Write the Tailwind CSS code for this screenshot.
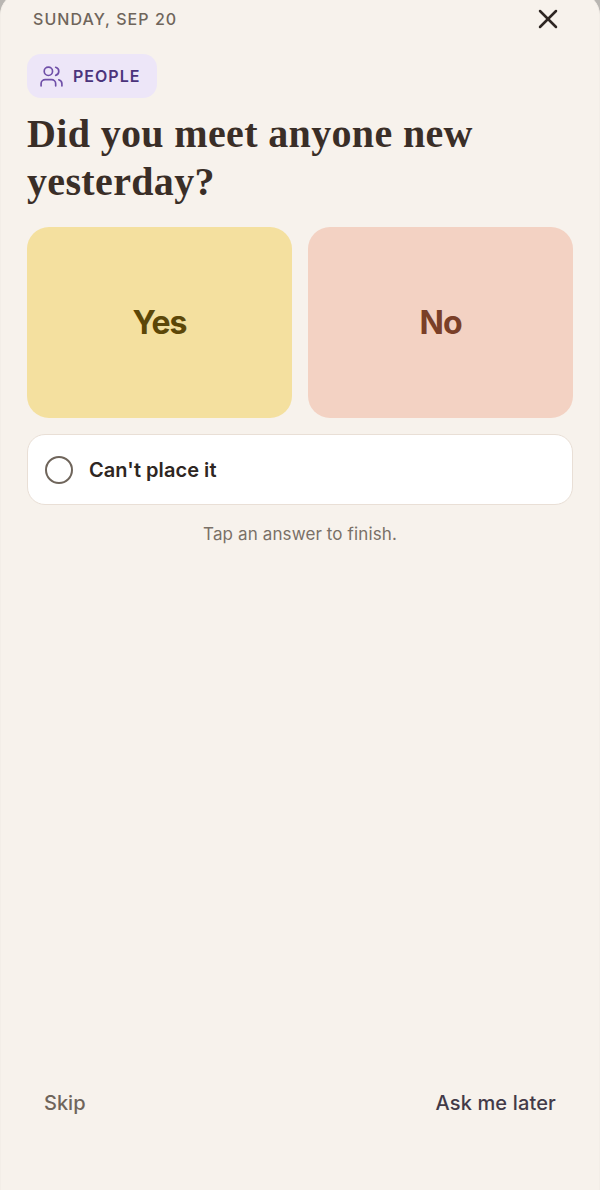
<!DOCTYPE html>
<html lang="en">
<head>
  <meta charset="UTF-8" />
  <meta name="viewport" content="width=device-width, initial-scale=1" />
  <title>Daily question</title>
  <script src="https://cdn.jsdelivr.net/npm/@tailwindcss/browser@4"></script>
</head>
<body class="bg-[#b9b6b2] font-['Inter',sans-serif] h-[1190px] overflow-hidden">
  <div class="-mt-[7px] h-[1197px] w-[600px] overflow-hidden flex flex-col bg-[#f7f2ec] rounded-t-[22px] border-x border-[#f3eee8] px-[26px] pt-[7px]">
    <header class="h-[38px] flex items-center justify-between pl-[6px] pr-[13px]">
      <span class="text-[16px] font-medium tracking-[1.05px] text-[#6f655b]">SUNDAY, SEP 20</span>
      <button class="text-[#2e2622]">
        <!-- close icon -->
        <svg class="w-[24px] h-[24px]" fill="none" stroke="currentColor" stroke-width="2.5" stroke-linecap="round" viewBox="0 0 24 24"><line x1="4" y1="4" x2="20" y2="20"/><line x1="20" y1="4" x2="4" y2="20"/></svg>
      </button>
    </header>

    <div class="mt-[16px] self-start h-[44px] w-[130px] rounded-[14px] bg-[#ede6f8] flex items-center pl-[12px] gap-[9px] text-[#4b347c]">
      <svg class="w-[25px] h-[25px]" fill="none" stroke="#6f4fa8" stroke-width="1.6" stroke-linecap="round" stroke-linejoin="round" viewBox="0 0 24 24"><path d="M16 21v-2a4 4 0 0 0-4-4H6a4 4 0 0 0-4 4v2"/><circle cx="9" cy="7" r="4"/><path d="M22 21v-2a4 4 0 0 0-3-3.87"/><path d="M16 3.13a4 4 0 0 1 0 7.75"/></svg>
      <span class="text-[16px] font-semibold tracking-[1px]">PEOPLE</span>
    </div>

    <h1 class="mt-[12px] font-['Liberation_Serif',serif] font-bold text-[40px] tracking-[0.35px] leading-[48px] text-[#3a2e27]">Did you meet anyone new<br />yesterday?</h1>

    <div class="mt-[21px] grid grid-cols-2 gap-[16px]">
      <button class="h-[191px] rounded-[22px] bg-[#f4e09f] text-[32px] font-bold tracking-[-1px] text-[#5c4708]">Yes</button>
      <button class="h-[191px] rounded-[22px] bg-[#f3d2c3] text-[32px] font-bold tracking-[-1px] text-[#7a3f28]">No</button>
    </div>

    <button class="mt-[16px] h-[71px] rounded-[18px] bg-white border-[1.5px] border-[#e9dfd6] flex items-center pl-[16.5px] gap-[16.5px] text-left">
      <span class="w-[28px] h-[28px] rounded-full border-[2.5px] border-[#6f655b]"></span>
      <span class="text-[20px] font-semibold tracking-[0.05px] text-[#2e2622]">Can't place it</span>
    </button>

    <p class="mt-[18px] text-center text-[17px] tracking-[0.12px] leading-[22px] text-[#7a7067]">Tap an answer to finish.</p>

    <footer class="mt-auto mb-[72px] flex items-center justify-between px-[17px]">
      <button class="text-[20px] font-medium text-[#6f655b]">Skip</button>
      <button class="text-[20px] font-medium tracking-[0.15px] text-[#433a48]">Ask me later</button>
    </footer>
  </div>
</body>
</html>
